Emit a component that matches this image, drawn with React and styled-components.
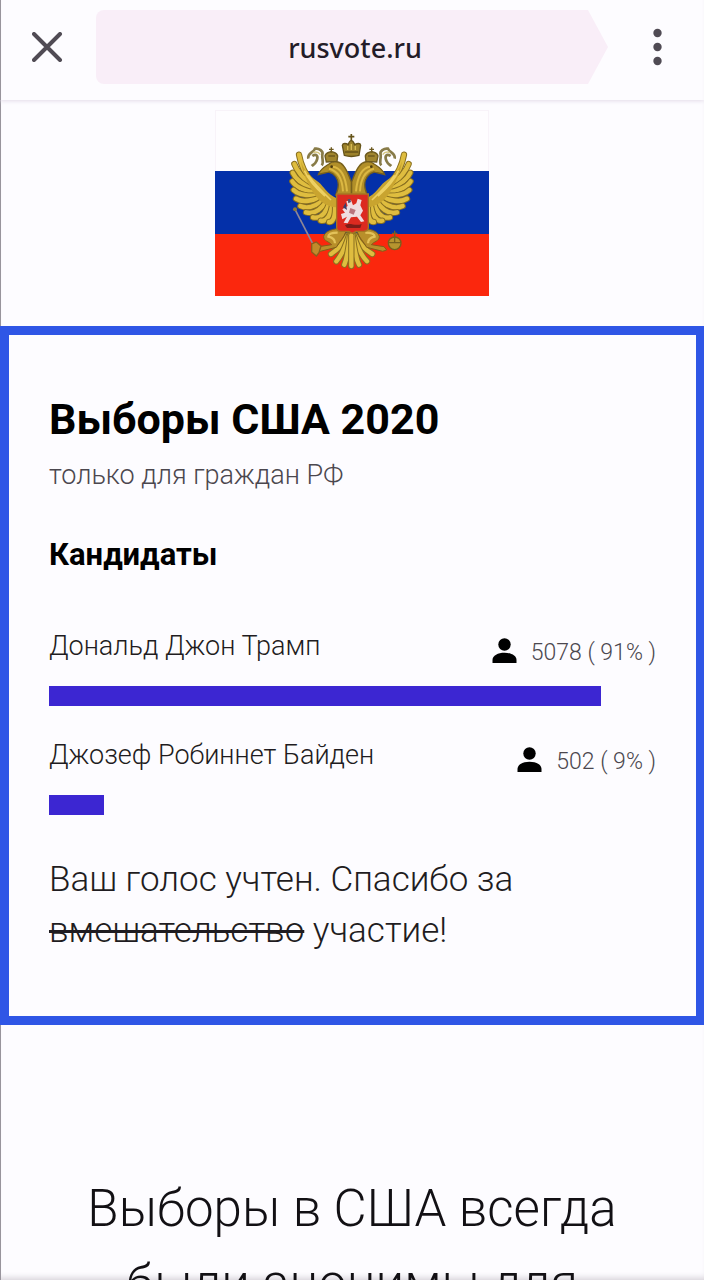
import React from 'react';
import styled, { createGlobalStyle } from 'styled-components';

const candidates = [
  { id: 1, name: 'Дональд Джон Трамп', votes: 5078, percent: 91 },
  { id: 2, name: 'Джозеф Робиннет Байден', votes: 502, percent: 9 },
];

const GlobalStyle = createGlobalStyle`
  * {
    box-sizing: border-box;
  }

  body {
    margin: 0;
    background: #fdfcff;
    color: #000;
    font-family: Roboto, 'Liberation Sans', sans-serif;
  }
`;

// Each feather runs from the shoulder out to the wing edge
const feathers = [
  'M102 192 C84 170 66 140 60 104',
  'M104 202 C82 184 56 160 46 132',
  'M108 212 C82 200 52 184 41 158',
  'M114 220 C88 214 54 206 40 184',
  'M120 227 C94 228 60 228 44 210',
  'M128 232 C104 240 72 250 51 236',
  'M136 238 C114 256 86 268 64 258',
  'M144 242 C126 268 104 284 81 277',
  'M152 246 C142 278 124 298 102 292',
  'M160 250 C156 284 144 306 125 302',
  'M168 256 C170 288 162 308 150 306',
];

const tailFeathers = [
  'M206 346 C190 376 172 392 156 402',
  'M228 346 C244 376 262 392 280 402',
  'M210 346 C198 384 186 408 172 424',
  'M224 346 C236 384 248 408 264 424',
  'M213 346 C208 390 204 414 196 434',
  'M221 346 C226 390 230 414 240 434',
  'M217 346 L217 438',
];

const Feather = ({ d }) => (
  <g fill='none' strokeLinecap='round'>
    <path d={d} stroke='#8a7020' strokeWidth='19' />
    <path d={d} stroke='#dfbd3f' strokeWidth='13' />
  </g>
);

const EagleHalf = () => (
  <g>
    {/* wing */}
    {feathers.map((d) => (
      <Feather key={d} d={d} />
    ))}
    <path
      d='M66 124 C78 160 100 172 118 186 C136 200 142 222 176 236 L174 262 C140 262 112 236 98 210 C84 186 70 158 66 124 Z'
      fill='#c9a42f'
    />
    <path
      d='M76 152 C90 184 110 204 138 228 M88 166 C104 190 122 208 156 240'
      fill='none'
      stroke='#eed163'
      strokeWidth='5'
    />
    {/* neck and head */}
    <path
      d='M217 240 L217 186 C210 168 204 150 194 138 C184 124 162 120 150 132 C138 140 124 146 118 164 C132 158 140 160 150 156 C166 160 178 176 178 194 C178 208 174 214 170 226 Z'
      fill='#b18f29'
      stroke='#77601c'
      strokeWidth='4'
    />
    <path
      d='M160 140 C186 142 200 172 204 214 M150 146 C176 152 190 176 192 214'
      fill='none'
      stroke='#dcb842'
      strokeWidth='6'
    />
    <circle cx='158' cy='140' r='4' fill='#4d3c12' />
    {/* small crown */}
    <path
      d='M142 126 L138 108 C140 98 150 98 157 94 C164 98 174 98 176 108 L174 124 Z'
      fill='#a0852f'
      stroke='#6d5a20'
      strokeWidth='4'
    />
    <path d='M157 82 V98 M150 88 H164 M148 108 H168' stroke='#6d5a20' strokeWidth='4' />
    {/* ribbon */}
    <path
      d='M88 116 C84 100 104 98 108 86 C120 84 134 94 130 104 C128 116 136 128 128 136 M100 108 C112 100 120 108 112 124 C108 134 102 134 98 138'
      fill='none'
      stroke='#887b49'
      strokeWidth='8'
    />
    <path d='M102 98 C112 94 120 98 124 104' fill='none' stroke='#d7c781' strokeWidth='4' />
    {/* leg */}
    <path
      d='M176 326 C156 328 136 336 134 350 C134 364 150 364 158 374 L120 380 L112 390 L124 394 L172 382 C180 366 196 352 200 336 Z'
      fill='#b88f2a'
      stroke='#7f5f1b'
      strokeWidth='3'
    />
    <path
      d='M176 338 C162 338 148 342 148 350 C158 352 168 358 168 370'
      fill='none'
      stroke='#e3c25a'
      strokeWidth='7'
    />
  </g>
);

const Flag = () => (
  <svg viewBox='0 0 274 186' width='100%' role='img' aria-label='Флаг России'>
    <rect x='0.5' y='0.5' width='273' height='185' fill='#fefdff' stroke='#f8f3f9' />
    <rect y='61' width='274' height='63' fill='#0430a9' />
    <rect y='124' width='274' height='62' fill='#fb270d' />
    <g transform='translate(64 10) scale(0.3333)'>
      {/* sceptre */}
      <path d='M48 268 L110 388' stroke='#8d8797' strokeWidth='5' />
      <circle cx='48' cy='268' r='6' fill='#8e7a3a' />
      {tailFeathers.map((d) => (
        <Feather key={d} d={d} />
      ))}
      <EagleHalf />
      <g transform='translate(435 0) scale(-1 1)'>
        <EagleHalf />
      </g>
      <circle cx='217' cy='132' r='19' fill='#fdfcff' />
      <path
        d='M98 372 L112 366 L126 378 L120 398 L112 408 L98 396 Z'
        fill='#c18a2b'
        stroke='#8a5d1d'
        strokeWidth='4'
      />
      {/* orb */}
      <circle cx='347' cy='370' r='19' fill='#b6952f' stroke='#78601d' strokeWidth='4' />
      <path
        d='M347 332 V352 M339 340 H355 M328 368 H366 M347 352 V368'
        stroke='#78601d'
        strokeWidth='4'
      />
      {/* main crown */}
      <path
        d='M196 106 L190 76 C192 68 202 70 208 74 C210 66 214 62 217 62 C220 62 224 66 227 74 C234 70 244 68 245 76 L240 106 C226 110 208 110 196 106 Z'
        fill='#9c822c'
        stroke='#655319'
        strokeWidth='4'
      />
      <path d='M217 42 V62 M208 50 H226 M198 96 H238' stroke='#655319' strokeWidth='5' />
      <path d='M206 78 V90 M217 72 V90 M229 78 V90' stroke='#d6bb55' strokeWidth='4' />
      {/* shield with the rider */}
      <path
        d='M173 222 H268 V322 C268 330 262 334 254 334 H230 L220 340 L210 334 H186 C178 334 173 330 173 322 Z'
        fill='#dc2a20'
        stroke='#a67522'
        strokeWidth='4'
      />
      <path
        d='M190 268 L206 258 L202 244 L216 240 L222 256 L232 250 L236 236 L248 240 L244 256 L252 272 L244 286 L256 304 L246 306 L234 290 L216 292 L206 310 L194 308 L204 290 L190 298 L186 282 L198 278 Z'
        fill='#efdde0'
      />
      <path d='M200 248 L192 262 L204 270 Z' fill='#39406e' />
      <path d='M206 238 L214 236 L216 246 L208 250 Z' fill='#5a5068' />
      <path d='M214 264 L230 270 L224 284 L210 278 Z' fill='#b9747d' />
      <path d='M198 316 C212 306 228 320 248 312 L244 324 H204 Z' fill='#7d1d18' />
    </g>
  </svg>
);

const PersonIcon = () => (
  <svg width='25' height='30' viewBox='0 0 25 30' aria-hidden='true'>
    <circle cx='12.5' cy='6.5' r='6.2' />
    <path d='M0.5 25 V22 C0.5 17.5 6 14.8 12.5 14.8 C19 14.8 24.5 17.5 24.5 22 V25 Z' />
  </svg>
);

const Page = styled.div`
  display: flex;
  flex-direction: column;
  height: 100vh;
  overflow: hidden;
  box-shadow: inset 1px 0 #98949c, inset 0 -6px 6px -4px #d5d0d8;
`;

const Toolbar = styled.header`
  display: grid;
  grid-template-columns: 96px 1fr 96px;
  align-items: center;
  flex-shrink: 0;
  padding: 10px 0 16px;
  box-shadow: inset 1px 0 #98949c, 0 1px 4px #e3dbe8;
`;

const IconButton = styled.button`
  display: flex;
  justify-content: center;
  padding: 0;
  border: 0;
  background: none;
  color: #504b54;
`;

const AddressBar = styled.div`
  display: flex;
  align-items: center;
  justify-content: center;
  height: 74px;
  padding-left: 6px;
  border-radius: 8px 16px 16px 8px;
  background: #f9eef8;
  clip-path: polygon(0 0, calc(100% - 20px) 0, 100% 50%, calc(100% - 20px) 100%, 0 100%);
  color: #241c28;
  font-family: 'Noto Sans', 'Open Sans', sans-serif;
  font-size: 27px;
  font-weight: 500;
`;

const Content = styled.main`
  flex: 1;
  min-height: 0;
  overflow-y: auto;
  scrollbar-width: none;
`;

const FlagBox = styled.div`
  width: 274px;
  margin: 10px auto 30px;

  svg {
    display: block;
  }
`;

const Card = styled.section`
  padding: 58px 40px 60px;
  border: 9px solid #2f56e6;
  border-right-width: 8px;
  background: #fdfcff;
`;

const Title = styled.h1`
  margin: 0;
  font-size: 43px;
  line-height: 52px;
`;

const Subtitle = styled.p`
  margin: 12px 0 42px;
  color: #4b474e;
  font-size: 27px;
  font-weight: 300;
  line-height: 36px;
`;

const SectionTitle = styled.h2`
  margin: 0 0 53px;
  font-size: 31px;
  line-height: 40px;
`;

const CandidateList = styled.ul`
  display: flex;
  flex-direction: column;
  gap: 31px;
  margin: 0;
  padding: 0;
  list-style: none;
`;

const CandidateHead = styled.div`
  display: flex;
  justify-content: space-between;
  min-height: 43px;
  margin-bottom: 15px;
  font-weight: 300;
  line-height: 36px;
`;

const Name = styled.span`
  color: #1f1c21;
  font-size: 27px;
`;

const Votes = styled.span`
  display: flex;
  align-items: center;
  align-self: flex-end;
  gap: 14px;
  color: #4b474e;
  font-size: 23px;

  svg {
    fill: #000;
  }
`;

const Bar = styled.div`
  width: ${({ $percent }) => $percent}%;
  height: 20px;
  background: #3c26d2;
`;

const Message = styled.p`
  margin: 39px 0 0;
  color: #1f1c21;
  font-size: 35px;
  font-weight: 300;
  line-height: 51px;

  s {
    text-decoration-thickness: 3px;
  }
`;

const Article = styled.article`
  max-width: 704px;
  margin: 146px auto 0;
  padding: 0 80px;
  color: #121014;
  font-size: 51px;
  font-weight: 300;
  line-height: 75px;
  text-align: center;

  p {
    margin: 0;
  }
`;

const App = () => {
  return (
    <Page>
      <GlobalStyle />
      <Toolbar>
        <IconButton aria-label='Закрыть'>
          <svg width='32' height='30' viewBox='0 0 32 30' stroke='currentColor' strokeWidth='4'>
            <path d='M2 2 L28 28 M28 2 L2 28' strokeLinecap='round' />
          </svg>
        </IconButton>
        <AddressBar>rusvote.ru</AddressBar>
        <IconButton aria-label='Меню'>
          <svg width='12' height='38' viewBox='0 0 12 38' fill='currentColor'>
            <circle cx='7.5' cy='5' r='4.2' />
            <circle cx='7.5' cy='19' r='4.2' />
            <circle cx='7.5' cy='33' r='4.2' />
          </svg>
        </IconButton>
      </Toolbar>

      <Content>
        <FlagBox>
          <Flag />
        </FlagBox>

        <Card>
          <Title>Выборы США 2020</Title>
          <Subtitle>только для граждан РФ</Subtitle>
          <SectionTitle>Кандидаты</SectionTitle>
          <CandidateList>
            {candidates.map(({ id, name, votes, percent }) => (
              <li key={id}>
                <CandidateHead>
                  <Name>{name}</Name>
                  <Votes>
                    <PersonIcon />
                    <span>{`${votes} ( ${percent}% )`}</span>
                  </Votes>
                </CandidateHead>
                <Bar $percent={percent} />
              </li>
            ))}
          </CandidateList>
          <Message>
            Ваш голос учтен. Спасибо за <s>вмешательство</s> участие!
          </Message>
        </Card>

        <Article>
          <p>Выборы в США всегда были анонимы для</p>
        </Article>
      </Content>
    </Page>
  );
};

export default App;
